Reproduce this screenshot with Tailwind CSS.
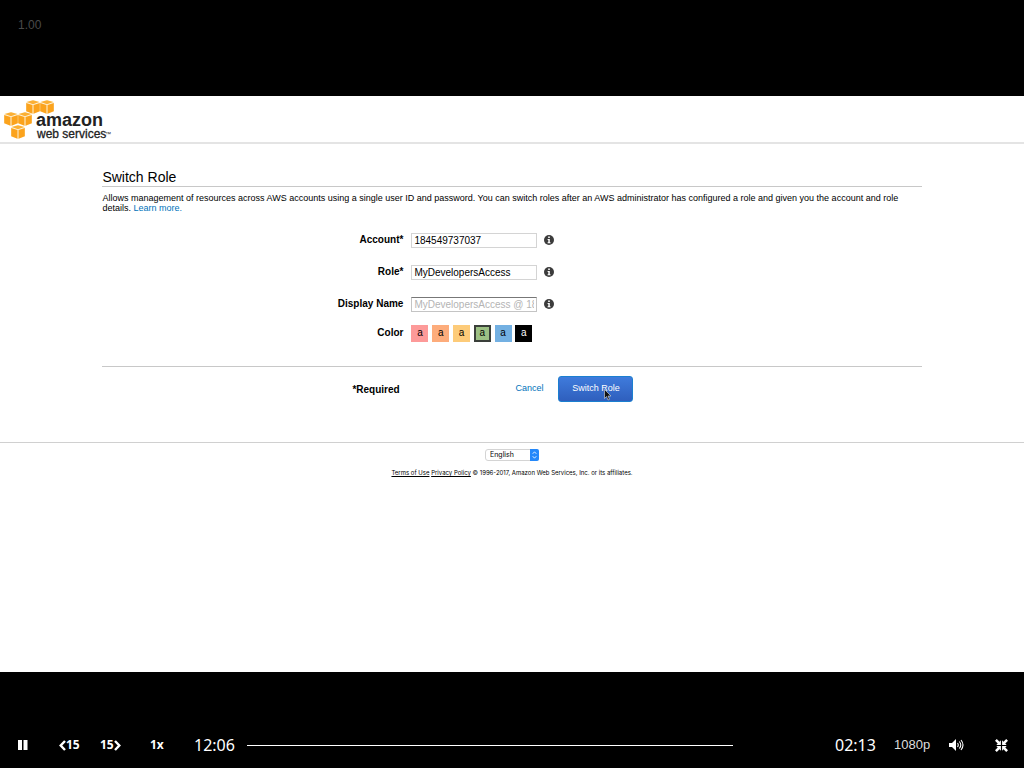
<!DOCTYPE html>
<html lang="en">
<head>
<meta charset="utf-8">
<meta name="viewport" content="width=device-width, initial-scale=1">
<title>Switch Role</title>
<script src="https://cdn.jsdelivr.net/npm/@tailwindcss/browser@4"></script>
</head>
<body class="flex min-h-screen flex-col bg-black font-['Liberation_Sans',Arial,sans-serif] text-black">
<svg class="hidden" aria-hidden="true">
  <symbol id="cube" viewBox="0 0 14 14">
    <path fill="#fdf3dd" d="M0 2 7 0l7 2v9.300L7 14l-7-2.700z"/>
    <path fill="#fbb034" d="M.6 2 7 .2 13.400 2 7 4.200z"/>
    <path fill="#fba31d" d="M.2 2.900 6.500 5v8.800L.2 11.200zM13.800 2.900 7.500 5v8.800l6.300-2.600z"/>
  </symbol>
  <symbol id="info" viewBox="0 0 10 10">
    <circle cx="5" cy="5" r="5" fill="#3c3c3c"/>
    <path fill="#fff" d="M4.200 1.600h1.600v1.500H4.200zM3.600 4h2.200v3.300h.7v1H3.600v-1h.7V5h-.7z"/>
  </symbol>
</svg>

<div class="h-24 px-[18px] pt-4 text-xs leading-[18px] text-[#4a4a4a]">1.00</div>

<section class="flex-1 bg-white">
  <header class="h-12 border-b-2 border-[#e4e4e4] pl-1 pt-1">
    <svg class="h-10 w-28" viewBox="0 0 112 40" role="img" aria-label="amazon web services">
      <use href="#cube" x="22" y="0" width="14" height="14"/>
      <use href="#cube" x="36" y="0" width="14" height="14"/>
      <use href="#cube" x="0" y="12" width="14" height="14"/>
      <use href="#cube" x="14" y="12" width="14" height="14"/>
      <use href="#cube" x="7" y="25" width="14" height="14"/>
      <text x="32" y="26" class="fill-[#222] font-['Liberation_Sans'] text-[18px] font-bold">amazon</text>
      <text x="33" y="38" class="fill-[#222] font-['Liberation_Sans'] text-[12px]" stroke="#222" stroke-width=".3">web services</text>
      <text x="101" y="36" class="fill-[#222] font-['Liberation_Sans'] text-[6px]">™</text>
    </svg>
  </header>

  <main class="mx-auto w-4/5 pt-[25px]">
    <h1 class="border-b border-[#c8c8c8] text-sm leading-[17px]">Switch Role</h1>
    <p class="pt-1.5 text-[9px] leading-[10px]">Allows management of resources across AWS accounts using a single user ID and password. You can switch roles after an AWS administrator has configured a role and given you the account and role details. <a href="#" class="inline-block text-[#0073bb]">Learn more.</a></p>

    <form>
      <div class="grid grid-cols-[301px_1fr] items-center gap-x-2 pt-[11px] text-[10px]">
        <label for="account" class="h-8 text-right font-bold leading-8">Account*</label>
        <div class="flex items-center gap-[7px]">
          <input id="account" value="184549737037" class="h-[15px] w-[126px] border border-[#d4d4d4] px-0.5 leading-[13px]">
          <svg class="size-[10px]"><use href="#info"/></svg>
        </div>
        <label for="role" class="h-8 text-right font-bold leading-8">Role*</label>
        <div class="flex items-center gap-[7px]">
          <input id="role" value="MyDevelopersAccess" class="h-[15px] w-[126px] border border-[#d4d4d4] px-0.5 leading-[13px]">
          <svg class="size-[10px]"><use href="#info"/></svg>
        </div>
        <label for="display" class="h-8 text-right font-bold leading-8">Display Name</label>
        <div class="flex items-center gap-[7px]">
          <input id="display" placeholder="MyDevelopersAccess @ 184549737037" class="h-[15px] w-[126px] border border-[#c4c4c4] border-t-[#777] px-0.5 leading-[13px] placeholder:text-[#b4b4b4]">
          <svg class="size-[10px]"><use href="#info"/></svg>
        </div>
        <span class="h-[26px] text-right font-bold leading-[26px]">Color</span>
        <div class="flex w-[121px] justify-between" role="group" aria-label="Color">
          <button type="button" class="size-[17px] bg-[#fd9a99] leading-4">a</button>
          <button type="button" class="size-[17px] bg-[#fdac7b] leading-4">a</button>
          <button type="button" class="size-[17px] bg-[#fdcb79] leading-4">a</button>
          <button type="button" class="size-[17px] border-2 border-[#3a3f3a] bg-[#9cc084] leading-3">a</button>
          <button type="button" class="size-[17px] bg-[#73b0e2] leading-4">a</button>
          <button type="button" class="size-[17px] bg-black leading-4 text-white">a</button>
        </div>
      </div>

      <div class="mt-5 flex items-center border-t border-[#c8c8c8] pl-[250px] pt-[9px]">
        <span class="w-[163px] text-[10px] font-bold">*Required</span>
        <a href="#" class="w-[43px] text-[9px] text-[#0073bb]">Cancel</a>
        <button type="button" class="relative h-[26px] w-[75px] rounded-[3px] border border-[#1b7fd0] bg-linear-to-b from-[#3f7bdc] to-[#2f5fbd] text-[9px] text-white">Switch Role
          <svg class="absolute left-[45px] top-3 h-3 w-2" viewBox="0 0 8 12"><path d="M.5.500v9l2-2 1.500 3.500 1.500-.7L4 7h3z" fill="#111" stroke="#ddd" stroke-width=".6"/></svg>
        </button>
      </div>
    </form>
  </main>

  <footer class="mt-10 flex flex-col items-center border-t border-[#d0d0d0] pt-1.5">
    <div class="relative">
      <select aria-label="Language" class="block h-3 w-[54px] appearance-none rounded-[3px] border border-[#d4d4d4] bg-white pl-1 font-['Inter'] text-[7px] leading-[10px]"><option>English</option></select>
      <svg class="pointer-events-none absolute right-0 top-0 h-3 w-[9px]" viewBox="0 0 9 12"><path d="M0 0h7a2 2 0 0 1 2 2v8a2 2 0 0 1-2 2H0z" fill="#2488fa"/><path d="m2.700 4.800 1.800-2 1.800 2M2.700 7.200l1.800 2 1.800-2" fill="none" stroke="#fff" stroke-width=".8"/></svg>
    </div>
    <p class="pt-[7px] font-['Inter',sans-serif] text-[6px] leading-[10px]"><a href="#" class="underline">Terms of Use</a> <a href="#" class="underline">Privacy Policy</a> © 1996-2017, Amazon Web Services, Inc. or its affiliates.</p>
  </footer>
</section>

<div class="flex h-24 items-center pl-[18px] pr-4 pt-[50px] font-['Noto_Sans',sans-serif] text-white">
  <button aria-label="Pause" class="w-[41px]"><svg class="h-[10px] w-[10px]" viewBox="0 0 10 10"><path fill="#fff" d="M0 0h4v10H0zM5.500 0h4v10h-4z"/></svg></button>
  <button aria-label="Back 15 seconds" class="flex w-[41px] items-center text-xs font-bold"><svg class="h-[11px] w-[7px]" viewBox="0 0 7 11"><path d="M6 1 1.700 5.500 6 10" fill="none" stroke="#fff" stroke-width="2.400"/></svg>15</button>
  <button aria-label="Forward 15 seconds" class="flex w-[50px] items-center text-xs font-bold">15<svg class="h-[11px] w-[7px]" viewBox="0 0 7 11"><path d="m1 1 4.300 4.500L1 10" fill="none" stroke="#fff" stroke-width="2.400"/></svg></button>
  <button class="w-11 text-left text-xs font-bold">1x</button>
  <span class="w-[53px] text-base">12:06</span>
  <div class="h-px flex-1 bg-white" role="progressbar" aria-label="Playback position"></div>
  <span class="ml-[102px] w-[59px] text-base">02:13</span>
  <button class="w-[55px] text-left font-['Liberation_Sans'] text-[13px] text-[#ddd]">1080p</button>
  <button aria-label="Volume" class="w-[46px]"><svg class="h-3 w-[15px]" viewBox="0 0 15 12"><path fill="#fff" d="M0 4h3l4-4v12L3 8H0z"/><path d="M8.500 4q1.500 2 0 4M10.300 2.500q3 3.500 0 7M12 1q4 5 0 10" fill="none" stroke="#fff" stroke-width="1.100"/></svg></button>
  <button aria-label="Exit full screen"><svg class="size-[13px]" viewBox="0 0 13 13"><path fill="#fff" d="M5.900 5.900H1.300L2.700 4.500 0 1.800 1.800 0l2.700 2.700 1.400-1.400zM7.100 5.900V1.300l1.400 1.400L11.200 0 13 1.800l-2.700 2.700 1.400 1.400zM5.900 7.100v4.600l-1.400-1.400L1.800 13 0 11.200l2.700-2.700-1.400-1.400zM7.100 7.100h4.600l-1.400 1.400 2.700 2.700-1.800 1.800-2.700-2.700-1.400 1.400z"/></svg></button>
</div>
</body>
</html>
